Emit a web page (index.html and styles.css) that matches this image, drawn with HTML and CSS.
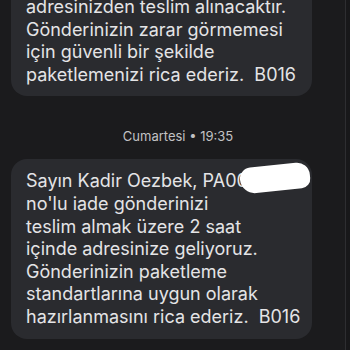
FILE: index.html
```html
<!DOCTYPE html>
<html lang="tr">
<head>
  <meta charset="UTF-8">
  <meta name="viewport" content="width=device-width, initial-scale=1.0">
  <title>Mesajlar</title>
  <link rel="stylesheet" href="styles.css">
</head>
<body>
  <div class="ekran">
    <div class="sohbet">
      <div class="balon balon-ust">
        adresinizden teslim alınacaktır.<br>
        Gönderinizin zarar görmemesi<br>
        için güvenli bir şekilde<br>
        paketlemenizi rica ederiz.&nbsp; B016
      </div>

      <div class="tarih">Cumartesi • 19:35</div>

      <div class="balon">
        Sayın Kadir Oezbek, PA00<span class="karalama"></span><br>
        no'lu iade gönderinizi<br>
        teslim almak üzere 2 saat<br>
        içinde adresinize geliyoruz.<br>
        Gönderinizin paketleme<br>
        standartlarına uygun olarak<br>
        hazırlanmasını rica ederiz.&nbsp; B016
      </div>
    </div>
    <div class="kenar"></div>
  </div>
</body>
</html>
```

FILE: styles.css
```css
html, body {
  margin: 0;
  height: 100%;
  background: #1b1b1d;
  overflow: hidden;
}
.ekran {
  display: flex;
  height: 350px;
}
.sohbet {
  width: 345px;
  padding-left: 11px;
  box-sizing: border-box;
}
.kenar {
  width: 5px;
  border-left: 1px solid #2e2e31;
  background: #18181a;
}
.balon {
  position: relative;
  width: 301px;
  box-sizing: border-box;
  padding: 11px 10px 10px 15px;
  background: #2a2b2f;
  border-radius: 16px;
  font-family: Inter, Roboto, sans-serif;
  font-size: 18px;
  line-height: 22.6px;
  color: #e4e4e6;
  white-space: nowrap;
}
.balon-ust {
  margin-top: -15px;
}
.tarih {
  margin: 32px 0 15px;
  text-align: center;
  width: 334px;
  font-family: Inter, Roboto, sans-serif;
  font-size: 13px;
  line-height: 16px;
  color: #c2c2c4;
}
.karalama {
  position: absolute;
  left: 229px;
  top: 6px;
  width: 70px;
  height: 26px;
  background: #ffffff;
  border-radius: 12px 14px 10px 16px;
  transform: rotate(-6deg);
}
```
